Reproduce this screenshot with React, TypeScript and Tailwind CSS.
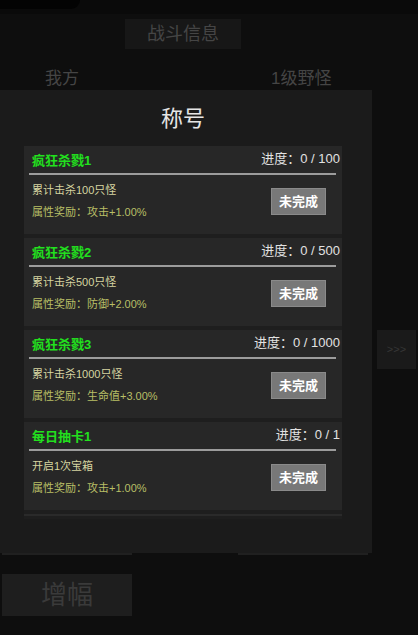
import React from "react";

const cards = [
  { title: "疯狂杀戮1", progress: "进度：0 / 100", desc: "累计击杀100只怪", reward: "属性奖励：攻击+1.00%" },
  { title: "疯狂杀戮2", progress: "进度：0 / 500", desc: "累计击杀500只怪", reward: "属性奖励：防御+2.00%" },
  { title: "疯狂杀戮3", progress: "进度：0 / 1000", desc: "累计击杀1000只怪", reward: "属性奖励：生命值+3.00%" },
  { title: "每日抽卡1", progress: "进度：0 / 1", desc: "开启1次宝箱", reward: "属性奖励：攻击+1.00%" },
];

function Card({ c }: { c: (typeof cards)[number] }) {
  return (
    <div className="shrink-0 h-[88px] bg-[#272727] flex flex-col">
      <div className="flex items-start justify-between h-[27px] pl-[8px] pr-[2px]">
        <span className="text-[13px] font-bold text-[#22e01e] leading-none mt-[8px]">{c.title}</span>
        <span className="text-[13px] text-[#e2e2e2] leading-none mt-[6px]">{c.progress}</span>
      </div>
      <div className="ml-[5px] mr-[6px] h-[2px] bg-[#9c9c9c]" />
      <div className="flex items-start justify-between pl-[8px] pr-[16px]">
        <div className="flex flex-col">
          <span className="text-[11px] leading-none text-[#d6d5a0] mt-[10px]">{c.desc}</span>
          <span className="text-[11px] leading-none text-[#b8bf66] mt-[11px]">{c.reward}</span>
        </div>
        <div className="mt-[13px] w-[55px] h-[27px] bg-[#787878] border border-[#8a8a8a] flex items-center justify-center text-[13px] font-bold text-white">
          未完成
        </div>
      </div>
    </div>
  );
}

export default function App() {
  return (
    <div
      className="relative w-[418px] h-[635px] overflow-hidden bg-[#0e0e0e]"
      style={{ fontFamily: '"Liberation Sans", "Noto Sans CJK SC", sans-serif' }}
    >
      {/* top strip */}
      <div className="h-[14px] bg-[#0a0a0a]">
        <div className="w-[80px] h-[9px] bg-[#030303] rounded-br-[10px]" />
      </div>
      {/* battle info */}
      <div className="ml-[125px] mt-[5px] w-[116px] h-[30px] bg-[#171717] flex items-center justify-center text-[18px] text-[#454545]">
        战斗信息
      </div>
      <div className="flex mt-[19px] h-[22px] items-center text-[17px] text-[#454545]">
        <span className="ml-[45px]">我方</span>
        <span className="ml-[192px]">1级野怪</span>
      </div>
      {/* panels behind */}
      <div className="flex mt-[8px] h-[457px]">
        <div className="ml-[2px] w-[130px] bg-[#202020]" />
        <div className="ml-[106px] w-[130px] bg-[#202020]" />
        <div className="ml-[9px] mt-[232px] w-[39px] h-[39px] bg-[#1a1a1a] flex items-center justify-center text-[11px] text-[#363636]">
          &gt;&gt;&gt;
        </div>
      </div>
      <div className="ml-[2px] mt-[19px] w-[130px] h-[42px] bg-[#1e1e1e] flex items-center justify-center text-[26px] text-[#3a3a3a]">
        增幅
      </div>

      {/* modal */}
      <div className="absolute left-0 top-[90px] w-[372px] h-[463px] bg-[#1b1b1b] flex flex-col">
        <div className="h-[56px] flex items-center justify-center text-[22px] text-[#e6e6e6] ml-[-6px]">称号</div>
        <div className="ml-[24px] w-[318px] h-[373px] overflow-hidden flex flex-col gap-[4px] bg-[#1e1e1e]">
          {cards.map((c) => (
            <Card key={c.title} c={c} />
          ))}
          <div className="shrink-0 h-[2px] bg-[#2a2a2a]" />
        </div>
      </div>
    </div>
  );
}
